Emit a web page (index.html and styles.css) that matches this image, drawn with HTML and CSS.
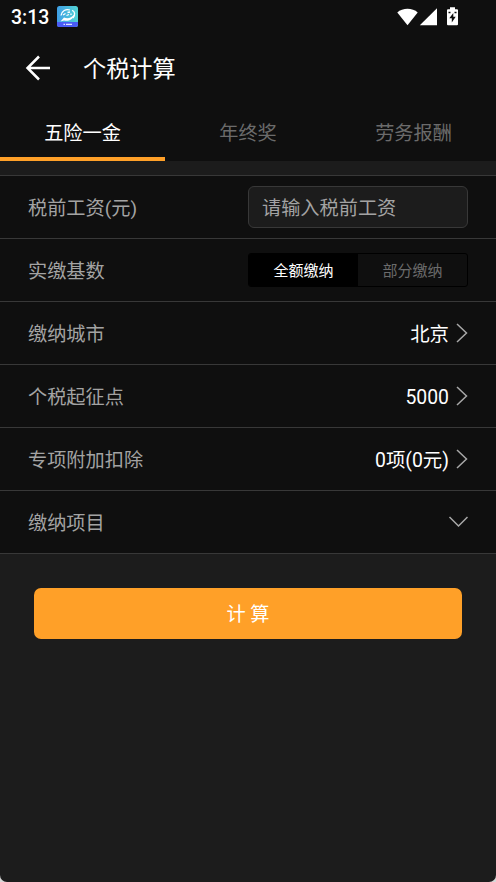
FILE: index.html
```html
<!DOCTYPE html>
<html lang="zh-CN">
<head>
<meta charset="utf-8">
<title>个税计算</title>
<link rel="stylesheet" href="styles.css">
</head>
<body>
<div class="screen">
  <header class="top">
    <div class="status">
      <span class="time">3:13</span>
      <svg class="app-icon" width="21" height="21" viewBox="0 0 21 21">
        <defs>
          <linearGradient id="sky" x1="0" y1="0" x2="1" y2="0"><stop offset="0" stop-color="#3f9fe6"/><stop offset="1" stop-color="#52d3d3"/></linearGradient>
          <clipPath id="tile"><rect width="21" height="21" rx="2.5"/></clipPath>
        </defs>
        <g clip-path="url(#tile)">
          <rect width="21" height="21" fill="url(#sky)"/>
          <rect y="16" width="21" height="5" fill="#4a5cf5"/>
        </g>
        <path d="M4 9.500C4.500 5 9 2.500 13 4M15 4.300C18 5 18.500 9 16 12" fill="none" stroke="#fff" stroke-width="1.300"/>
        <path d="M3.500 15.500L7 11.500C11 13 14 12 17.500 8.500C16 14 11 15.500 7 14.500Z" fill="#fff"/>
        <path d="M6 9L8.500 7.500M10.500 6.500L13 6M9.500 9.500L12 8.500M14 7.500V9" stroke="#fff" stroke-width="1.300"/>
        <path d="M6.500 18.300H8M9 18.300H15" stroke="#dfe4ff" stroke-width="1.200"/>
      </svg>
      <svg class="signals" width="62" height="20" viewBox="0 0 62 20" fill="#fff">
        <path d="M0.300 4.500C5.500-.5 15.500-.5 20.700 4.500L10.500 17.200Z"/>
        <path d="M40 .2V17.200H22.800Z"/>
        <path fill-rule="evenodd" d="M53-.7H58V1.300H60Q61 1.300 61 2.300V16.200Q61 17.200 60 17.200H51Q50 17.200 50 16.200V2.300Q50 1.300 51 1.300H53ZM56.300 5L52.300 10.300H54.800V14.500L58.700 8.700H56.300Z"/>
        <path d="M51.500 4.500H53.500M57.500 4.500H59.500" stroke="#111" stroke-width="1.500"/>
      </svg>
    </div>
    <div class="title-bar">
      <svg class="back" width="26" height="26" viewBox="0 0 26 26" fill="none" stroke="#fff" stroke-width="2.500"><path d="M14 1.500L2.500 13L14 24.500M2.500 13H25"/></svg>
      <h1 class="title">个税计算</h1>
    </div>
    <nav class="tabs">
      <a class="tab tab-active">五险一金</a>
      <a class="tab">年终奖</a>
      <a class="tab">劳务报酬</a>
    </nav>
  </header>
  <main>
    <div class="list">
      <div class="row"><span class="label">税前工资(元)</span><input class="salary" type="text" placeholder="请输入税前工资"></div>
      <div class="row"><span class="label">实缴基数</span>
        <div class="segment"><span class="option option-on">全额缴纳</span><span class="option">部分缴纳</span></div>
      </div>
      <div class="row"><span class="label">缴纳城市</span><span class="value">北京</span><svg class="chevron" width="12" height="20" viewBox="0 0 12 20"><path d="M1 1L10.500 10L1 19"/></svg></div>
      <div class="row"><span class="label">个税起征点</span><span class="value">5000</span><svg class="chevron" width="12" height="20" viewBox="0 0 12 20"><path d="M1 1L10.500 10L1 19"/></svg></div>
      <div class="row"><span class="label">专项附加扣除</span><span class="value">0项(0元)</span><svg class="chevron" width="12" height="20" viewBox="0 0 12 20"><path d="M1 1L10.500 10L1 19"/></svg></div>
      <div class="row"><span class="label">缴纳项目</span><svg class="chevron" width="20" height="12" viewBox="0 0 20 12"><path d="M1.500 1L10.500 10L19.500 1"/></svg></div>
    </div>
    <button class="submit">计 算</button>
  </main>
</div>
</body>
</html>
```
FILE: styles.css
```css
* { box-sizing: border-box; }
body {
  margin: 0;
  background: #d8d8d8;
  font-family: Roboto, "Noto Sans CJK SC", sans-serif;
  font-size: 19.2px;
}
.screen {
  height: 882px;
  background: #1c1c1c;
  border-radius: 0 0 7px 7px;
  overflow: hidden;
}
.top { height: 161px; background: #0f0f0f; }
.status { display: flex; height: 34px; padding: 6px 37px 0 11px; }
.time { color: #fff; font-size: 19.5px; font-weight: 500; line-height: 24px; width: 46px; }
.app-icon { display: block; }
.signals { margin: 2px 0 0 auto; overflow: visible; }
.title-bar { display: flex; align-items: center; height: 68px; padding-left: 25px; }
.title { margin: 0 0 0 32px; padding-top: 2px; color: #fff; font-size: 23.2px; font-weight: 400; line-height: 34px; }
.tabs { display: grid; grid-template-columns: 165px 166px 165px; height: 59px; }
.tab { height: 59px; padding-top: 2px; color: #6b6b6b; text-align: center; line-height: 60px; }
.tab-active { color: #fff; border-bottom: 4px solid #ffa028; }
.list { margin-top: 14px; border-top: 1px solid #383838; background: #0f0f0f; }
.row {
  display: flex;
  align-items: center;
  height: 63px;
  padding: 0 28px;
  border-bottom: 1px solid #383838;
}
.label { margin-right: auto; padding-top: 3px; color: #a3a3a3; line-height: 28px; }
.salary {
  width: 220px;
  height: 42px;
  padding: 2px 13px 0;
  border: 1px solid #383838;
  border-radius: 6px;
  background: #1c1c1c;
  color: #fff;
  font: inherit;
}
.salary::placeholder { color: #a3a3a3; opacity: 1; }
.segment {
  display: grid;
  grid-template-columns: 1fr 1fr;
  width: 220px;
  height: 34px;
  border: 1px solid #000;
  border-radius: 3px;
  overflow: hidden;
}
.option { padding-top: 1px; color: #6b6b6b; font-size: 15px; line-height: 32px; text-align: center; }
.option-on { background: #000; color: #fff; }
.value { margin-right: 7px; padding-top: 3px; color: #fff; font-size: 19.4px; line-height: 28px; }
.chevron { margin-bottom: 1px; fill: none; stroke: #a8a8a8; stroke-width: 1.5; }
.submit {
  display: block;
  width: 428px;
  height: 51px;
  margin: 34px auto 0;
  padding: 0 0 2px;
  border: 0;
  border-radius: 7px;
  background: #ffa028;
  color: #fff;
  font: inherit;
}
```
